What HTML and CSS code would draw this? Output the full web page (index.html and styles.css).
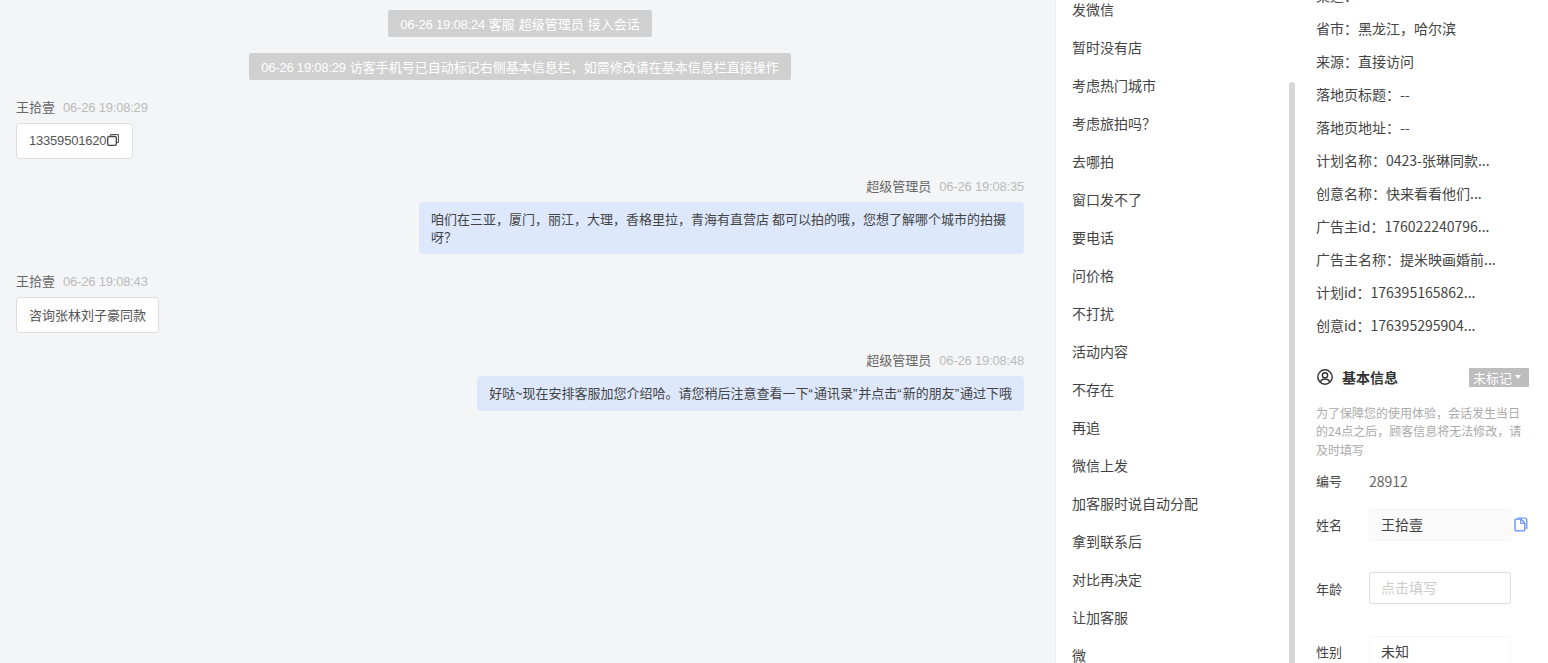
FILE: index.html
```html
<!DOCTYPE html>
<html lang="zh-CN">
<head>
<meta charset="utf-8">
<title>会话</title>
<link rel="stylesheet" href="styles.css">
</head>
<body>
<div class="app">
  <main class="chat">
    <div class="notice"><span class="n">06-26 19:08:24</span> 客服 超级管理员 接入会话</div>
    <div class="notice"><span class="n">06-26 19:08:29</span> 访客手机号已自动标记右侧基本信息栏，如需修改请在基本信息栏直接操作</div>

    <div class="msg msg-first">
      <div class="meta"><span class="who">王拾壹</span><span class="time">06-26 19:08:29</span></div>
      <div class="bubble in"><span class="n phone">13359501620</span><svg class="copy" viewBox="0 0 12 12" width="12" height="12"><path d="M3.5 1.8V.6h7.9v7.9H9.8" fill="none" stroke="#444" stroke-width="1"/><rect x=".7" y="2.5" width="8.6" height="8.8" rx="1.3" fill="none" stroke="#444" stroke-width="1.3"/></svg></div>
    </div>

    <div class="msg out">
      <div class="meta"><span class="who">超级管理员</span><span class="time">06-26 19:08:35</span></div>
      <div class="bubble mine">咱们在三亚，厦门，丽江，大理，香格里拉，青海有直营店 都可以拍的哦，您想了解哪个城市的拍摄呀？</div>
    </div>

    <div class="msg">
      <div class="meta"><span class="who">王拾壹</span><span class="time">06-26 19:08:43</span></div>
      <div class="bubble in">咨询张林刘子豪同款</div>
    </div>

    <div class="msg out">
      <div class="meta"><span class="who">超级管理员</span><span class="time">06-26 19:08:48</span></div>
      <div class="bubble mine">好哒~现在安排客服加您介绍哈。请您稍后注意查看一下<span class="q">“</span>通讯录<span class="q">”</span>并点击<span class="q">“</span>新的朋友<span class="q">”</span>通过下哦</div>
    </div>
  </main>

  <section class="quick">
    <ul class="quick-list">
      <li>发微信</li>
      <li>暂时没有店</li>
      <li>考虑热门城市</li>
      <li>考虑旅拍吗？</li>
      <li>去哪拍</li>
      <li>窗口发不了</li>
      <li>要电话</li>
      <li>问价格</li>
      <li>不打扰</li>
      <li>活动内容</li>
      <li>不存在</li>
      <li>再追</li>
      <li>微信上发</li>
      <li>加客服时说自动分配</li>
      <li>拿到联系后</li>
      <li>对比再决定</li>
      <li>让加客服</li>
      <li>微</li>
    </ul>
    <div class="scrollbar"></div>
  </section>

  <aside class="side">
    <ul class="facts">
      <li>渠道：</li>
      <li>省市：黑龙江，哈尔滨</li>
      <li>来源：直接访问</li>
      <li>落地页标题：--</li>
      <li>落地页地址：--</li>
      <li>计划名称：0423-张琳同款...</li>
      <li>创意名称：快来看看他们...</li>
      <li>广告主id：176022240796...</li>
      <li>广告主名称：提米映画婚前...</li>
      <li>计划id：176395165862...</li>
      <li>创意id：176395295904...</li>
    </ul>
    <div class="info-head">
      <svg class="user-icon" viewBox="0 0 16 16" width="16" height="16"><circle cx="8" cy="8" r="7.2" fill="none" stroke="#333" stroke-width="1.4"/><circle cx="8" cy="6.3" r="2.6" fill="none" stroke="#333" stroke-width="1.4"/><path d="M3.4 12.8c.8-1.9 2.5-2.8 4.6-2.8s3.8.9 4.6 2.8" fill="none" stroke="#333" stroke-width="1.4"/></svg>
      <h3>基本信息</h3>
      <span class="tag">未标记<i class="caret"></i></span>
    </div>
    <p class="note">为了保障您的使用体验，会话发生当日的24点之后，顾客信息将无法修改，请及时填写</p>
    <div class="row row-id"><label>编号</label><span class="val">28912</span></div>
    <div class="row"><label>姓名</label><div class="field filled">王拾壹</div>
      <svg class="doc-icon" viewBox="0 0 14 15" width="14" height="15"><path d="M3.5 1h7.2c1.2 0 2.1.9 2.1 2.1V12" fill="none" stroke="#5b8cff" stroke-width="1.2"/><path d="M1 3.4c0-.7.5-1.2 1.2-1.2h4.9L10.8 6v6.6c0 .7-.5 1.2-1.2 1.2H2.2c-.7 0-1.2-.5-1.2-1.2z" fill="#fff" stroke="#5b8cff" stroke-width="1.3"/><path d="M6.6 2.4v4h4" fill="none" stroke="#5b8cff" stroke-width="1"/></svg>
    </div>
    <div class="row"><label>年龄</label><div class="field empty">点击填写</div></div>
    <div class="row"><label>性别</label><div class="field plain">未知</div></div>
  </aside>
</div>
</body>
</html>
```

FILE: styles.css
```css
* { box-sizing: border-box; }
html, body { margin: 0; padding: 0; height: 100%; overflow: hidden; }
body { font-family: "Noto Sans CJK SC", "Noto Sans", sans-serif; font-size: 13px; color: #444; background: #fff; }
ul { list-style: none; margin: 0; padding: 0; }

.app { display: flex; height: 663px; overflow: hidden; }

.chat { width: 1055px; flex: none; background: #f4f5f7; padding: 10px 31px 0 16px; display: flex; flex-direction: column; }
.notice { align-self: center; height: 27px; line-height: 27px; padding: 0 12px; margin: 0 0 16px; background: #d0d0d0; color: #fff; border-radius: 2px; white-space: nowrap; word-spacing: 1px; }
.n { font-family: "Liberation Sans", sans-serif; letter-spacing: -0.2px; word-spacing: 0; }
.q { font-family: "Liberation Sans", sans-serif; letter-spacing: 1px; }

.msg { display: flex; flex-direction: column; align-items: flex-start; margin-top: 19px; }
.msg-first { margin-top: 3px; }
.msg.out { align-items: flex-end; }
.meta { height: 16px; line-height: 16px; margin-bottom: 8px; white-space: nowrap; }
.who { color: #666; }
.time { color: #bbb; font-family: "Liberation Sans", sans-serif; letter-spacing: -0.2px; margin-left: 8px; }
.bubble { line-height: 18px; padding: 8px 12px; border-radius: 4px; color: #444; }
.bubble.in { background: #fff; border: 1px solid #ddd; height: 36px; display: flex; align-items: center; padding: 0 12px; white-space: nowrap; color: #555; }
.bubble.mine { background: #dde8fd; max-width: 605px; }
.phone { font-size: 13px; }
.copy { display: block; flex: none; margin: -2px 1px 0 1px; }

.quick { width: 241px; flex: none; position: relative; background: #fff; border-left: 1px solid #eeeeee; overflow: hidden; }
.quick-list { margin-top: -10px; padding-left: 16px; }
.quick-list li { height: 38px; line-height: 38px; font-size: 14px; color: #444; white-space: nowrap; }
.scrollbar { position: absolute; top: 82px; bottom: 0; right: 1px; width: 6px; background: #d6d6d6; border-radius: 3px 3px 0 0; }

.side { flex: 1; min-width: 0; padding: 0 19px 0 20px; overflow: hidden; border-left: 1px solid #eeeeee; margin-left: -1px; }
.facts { margin-top: -21px; }
.facts li { height: 33px; line-height: 33px; font-size: 14px; color: #444; white-space: nowrap; }

.info-head { display: flex; align-items: center; height: 20px; margin-top: 25px; }
.user-icon { display: block; flex: none; margin-left: 1px; }
.info-head h3 { margin: 0 0 0 9px; font-size: 14px; font-weight: 700; color: #333; flex: 1; }
.tag { display: flex; align-items: center; height: 19px; width: 60px; padding-left: 4px; background: #bdbdbd; color: #fff; font-size: 13px; border-radius: 1px; }
.caret { width: 0; height: 0; margin-left: 3px; border: 3px solid transparent; border-top: 4px solid #fff; border-bottom: 0; }
.note { margin: 16.5px 0 0; font-size: 12px; line-height: 18.5px; color: #aaa; width: 208px; }

.row { display: flex; align-items: center; height: 32px; margin-bottom: 31.5px; font-size: 13px; }
.row label { width: 53px; flex: none; color: #444; }
.row-id { height: 20px; margin-top: 11.5px; margin-bottom: 18px; }
.val { color: #666; font-size: 14px; }
.field { width: 142px; height: 32px; line-height: 28px; padding: 0 11px; border-radius: 2px; border: 1px solid transparent; flex: none; font-size: 14px; }
.filled { background: #fafafa; border-color: #f5f5f5; }
.empty { border-color: #ddd; color: #ccc; }
.plain { border-color: #f5f5f5; }
.doc-icon { display: block; flex: none; margin-left: 3px; }
```
